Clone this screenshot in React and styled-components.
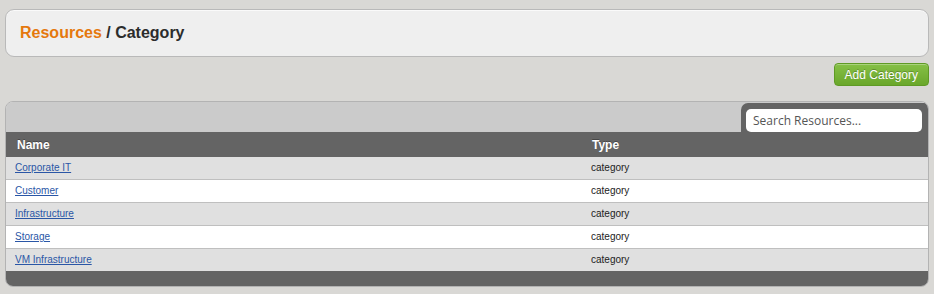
import React from "react";
import styled, { createGlobalStyle } from "styled-components";

const Global = createGlobalStyle`
  html, body { margin: 0; padding: 0; background: #d9d8d5; }
  body { font-family: "Liberation Sans", Arial, sans-serif; }
`;

const Page = styled.div`
  padding: 9px 5px 8px 5px;
  display: flex;
  flex-direction: column;
`;

const TitleBar = styled.div`
  height: 46px;
  border: 1px solid #b9b9b9;
  border-radius: 9px;
  background: #efefef;
  display: flex;
  align-items: center;
  padding: 0 14px;
  font-size: 16px;
  font-weight: bold;
  color: #2c2c2c;
  box-shadow: inset 0 1px 0 #fafafa;
`;

const Crumb = styled.span`
  color: #e5780d;
`;

const Actions = styled.div`
  display: flex;
  justify-content: flex-end;
  margin-top: 6px;
  margin-bottom: 15px;
`;

const GreenButton = styled.button`
  height: 23px;
  padding: 0 10px;
  border: 1px solid #5f9a25;
  border-radius: 4px;
  background: linear-gradient(#86c046, #6aa72b);
  color: #fff;
  font-family: "Liberation Sans", Arial, sans-serif;
  font-size: 12px;
  text-shadow: 0 -1px 0 rgba(0,0,0,0.25);
  cursor: pointer;
  box-shadow: inset 0 1px 0 rgba(255,255,255,0.3);
`;

const Panel = styled.div`
  border: 1px solid #b3b3b3;
  border-radius: 8px;
  overflow: hidden;
  background: #e0e0e0;
`;

const TopBar = styled.div`
  height: 30px;
  background: #cbcbcb;
  display: flex;
  justify-content: flex-end;
  align-items: flex-end;
`;

const SearchTab = styled.div`
  background: #646464;
  border-top-left-radius: 7px;
  padding: 6px 6px 0 5px;
  height: 29px;
  box-sizing: border-box;
`;

const SearchInput = styled.input`
  width: 176px;
  height: 23px;
  box-sizing: border-box;
  border: none;
  border-radius: 5px;
  background: #fff;
  padding: 0 7px;
  font-family: "Open Sans", sans-serif;
  font-size: 12px;
  color: #333;
  outline: none;
  &::placeholder { color: #555; }
`;

const Table = styled.table`
  width: 100%;
  border-collapse: collapse;
  table-layout: fixed;
`;

const HeadCell = styled.th`
  box-sizing: border-box;
  background: #646464;
  color: #fff;
  font-size: 12px;
  font-weight: bold;
  text-align: left;
  height: 25px;
  padding: 0 0 0 ${p => p.$pad}px;
  width: ${p => p.$w || "auto"};
  text-shadow: 0 -1px 0 rgba(0,0,0,0.3);
`;

const Row = styled.tr`
  background: ${p => (p.$alt ? "#ffffff" : "#e0e0e0")};
  border-top: ${p => (p.$first ? "none" : "1px solid #bfbfbf")};
`;

const Cell = styled.td`
  height: 22px;
  padding: 0 0 0 ${p => p.$pad}px;
  font-size: 10px;
  line-height: 22px;
  vertical-align: top;
  color: #222;
`;

const Link = styled.a`
  color: #2a56a6;
  text-decoration: underline;
`;

const Footer = styled.div`
  height: 15px;
  background: #646464;
`;

const rows = ["Corporate IT", "Customer", "Infrastructure", "Storage", "VM Infrastructure"];

export default function App() {
  return (
    <>
      <Global />
      <Page>
        <TitleBar>
          <Crumb>Resources</Crumb>&nbsp;/ Category
        </TitleBar>
        <Actions>
          <GreenButton>Add Category</GreenButton>
        </Actions>
        <Panel>
          <TopBar>
            <SearchTab>
              <SearchInput placeholder="Search Resources..." />
            </SearchTab>
          </TopBar>
          <Table>
            <thead>
              <tr>
                <HeadCell $pad={11} $w="574px">Name</HeadCell>
                <HeadCell $pad={12}>Type</HeadCell>
              </tr>
            </thead>
            <tbody>
              {rows.map((r, i) => (
                <Row key={r} $alt={i % 2 === 1} $first={i === 0}>
                  <Cell $pad={9}><Link href="#">{r}</Link></Cell>
                  <Cell $pad={11}>category</Cell>
                </Row>
              ))}
            </tbody>
          </Table>
          <Footer />
        </Panel>
      </Page>
    </>
  );
}
